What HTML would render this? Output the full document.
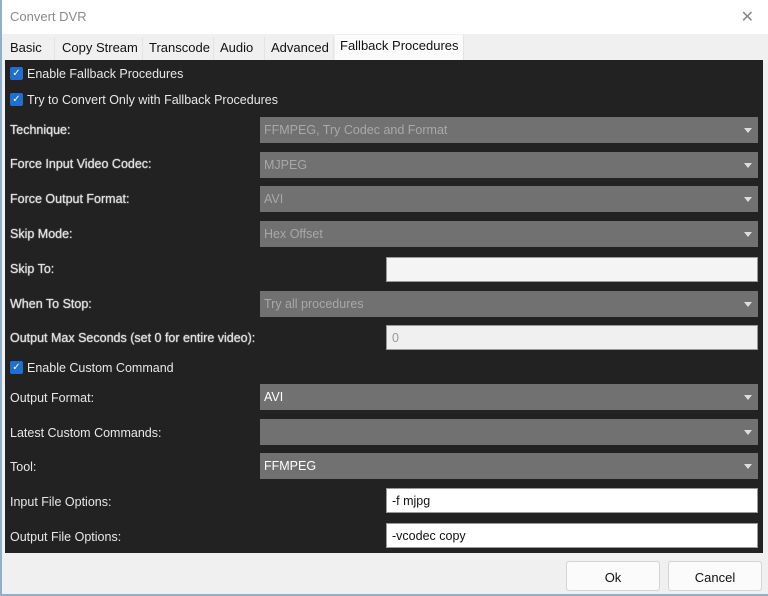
<!DOCTYPE html><html><head><style>
*{box-sizing:border-box;margin:0;padding:0}
body{width:768px;height:596px;overflow:hidden;background:#f0f0f0;font-family:"Liberation Sans",sans-serif;font-size:12.5px;position:relative}
.edge{position:absolute;left:0;top:0;width:768px;height:596px;border-left:2px solid #8fb0cc;border-bottom:2px solid #8fb0cc;pointer-events:none}
.title{position:absolute;left:0;top:0;width:768px;height:34px;background:#fff;color:#8a8a8a;font-size:13px;padding:9px 0 0 10px}
.x{position:absolute;right:14px;top:7px;font-size:16px;color:#888}
.tab{position:absolute;top:37px;height:23px;padding:3px 0 0 5px;color:#111;font-size:13px;border-right:1px solid #e4e4e4}
.panel{position:absolute;left:5px;top:60px;width:758px;height:493px;background:#222}
.l{position:absolute;left:10px;color:#e8e8e8;font-size:12.5px}
.b{color:#e0e0e0;text-shadow:0 0 1px #fff}
.cb{position:absolute;left:10px;width:13px;height:13px;background:#1e6fcf;border-radius:2px;color:#fff;font-size:10px;line-height:13px;text-align:center}
.c{position:absolute;left:260px;width:498px;height:26px;background:#717171;padding:6px 0 0 4px;font-size:12.5px}
.c.d{color:#a8a8a8}.c.e{color:#fff}
.c:after{content:"";position:absolute;right:6px;top:11px;border-left:4px solid transparent;border-right:4px solid transparent;border-top:5px solid #ddd}
.t{position:absolute;left:386px;width:372px;height:25px;background:#fff;border:1px solid #999;padding:5px 0 0 5px;color:#111}
.t.d{background:#f0f0f0;color:#999}
.btn{position:absolute;top:561px;width:94px;height:30px;background:#fbfbfb;border:1px solid #d4d4d4;border-radius:3px;text-align:center;padding-top:8px;font-size:13px;color:#111}
</style></head><body>
<div class="title">Convert DVR<span class="x">✕</span></div>
<div class="tab" style="left:5px;width:50px">Basic</div>
<div class="tab" style="left:57px;width:86px">Copy Stream</div>
<div class="tab" style="left:144px;width:70px">Transcode</div>
<div class="tab" style="left:215px;width:50px">Audio</div>
<div class="tab" style="left:266px;width:68px">Advanced</div>
<div class="tab" style="left:335px;width:129px;top:35px;background:#fbfbfb;height:25px">Fallback Procedures</div>
<div class="panel"></div>
<div class="cb" style="top:67px">✓</div><div class="l" style="left:27px;top:67px">Enable Fallback Procedures</div>
<div class="cb" style="top:93px">✓</div><div class="l" style="left:27px;top:93px">Try to Convert Only with Fallback Procedures</div>
<div class="l b" style="top:123px">Technique:</div><div class="c d" style="top:117px">FFMPEG, Try Codec and Format</div>
<div class="l b" style="top:157px">Force Input Video Codec:</div><div class="c d" style="top:152px">MJPEG</div>
<div class="l b" style="top:192px">Force Output Format:</div><div class="c d" style="top:186px">AVI</div>
<div class="l b" style="top:227px">Skip Mode:</div><div class="c d" style="top:221px">Hex Offset</div>
<div class="l b" style="top:262px">Skip To:</div><div class="t d" style="top:257px;background:#f4f4f4"></div>
<div class="l b" style="top:297px">When To Stop:</div><div class="c d" style="top:291px">Try all procedures</div>
<div class="l b" style="top:331px">Output Max Seconds (set 0 for entire video):</div><div class="t d" style="top:325px">0</div>
<div class="cb" style="top:361px">✓</div><div class="l" style="left:27px;top:361px">Enable Custom Command</div>
<div class="l" style="top:391px">Output Format:</div><div class="c e" style="top:384px">AVI</div>
<div class="l" style="top:426px">Latest Custom Commands:</div><div class="c e" style="top:419px"></div>
<div class="l" style="top:460px">Tool:</div><div class="c e" style="top:453px">FFMPEG</div>
<div class="l" style="top:495px">Input File Options:</div><div class="t" style="top:488px">-f mjpg</div>
<div class="l" style="top:530px">Output File Options:</div><div class="t" style="top:523px">-vcodec copy</div>
<div class="btn" style="left:566px">Ok</div>
<div class="btn" style="left:668px">Cancel</div>
<div class="edge"></div>
</body></html>
